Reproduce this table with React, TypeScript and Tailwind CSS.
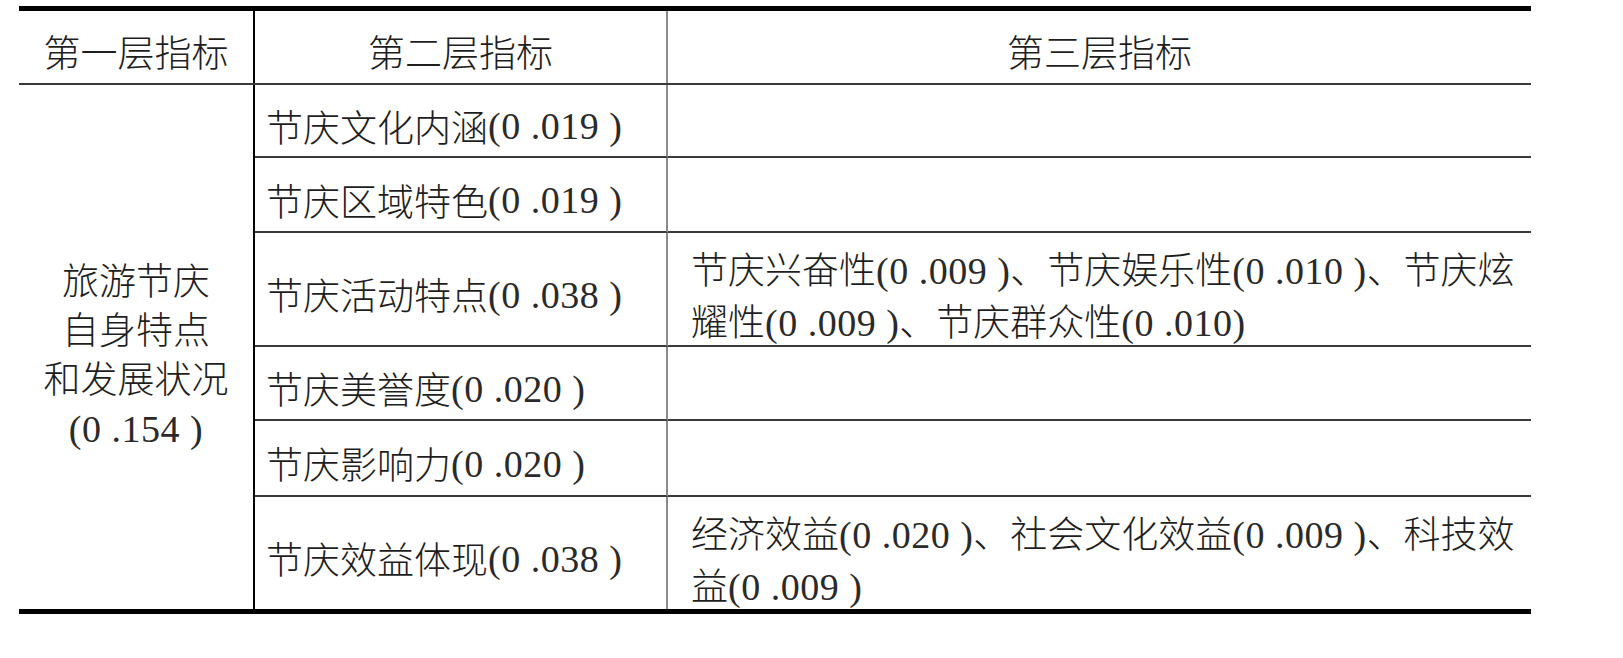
import React from "react";

const cjk = {
  fontFamily: '"Noto Sans CJK SC", sans-serif',
};

function N({ children }: { children: React.ReactNode }) {
  return (
    <span
      className="text-[38px] font-normal tracking-[0.5px] text-[#2a2a2a]"
      style={{ fontFamily: '"Liberation Serif", "Times New Roman", serif' }}
    >
      {children}
    </span>
  );
}

function Cell2({ children, last }: { children: React.ReactNode; last?: boolean }) {
  return (
    <div
      className={`flex items-center pl-[11px] pt-[12px] whitespace-nowrap border-r-[2px] border-[#8a8a8a] ${
        last ? "" : "border-b-[2px] border-b-[#3a3a3a]"
      }`}
    >
      {children}
    </div>
  );
}

function Cell3({ children, last }: { children?: React.ReactNode; last?: boolean }) {
  return (
    <div
      className={`flex items-center pl-[23px] pt-[14px] whitespace-nowrap leading-[49px] ${
        last ? "" : "border-b-[2px] border-[#3a3a3a]"
      }`}
    >
      <div>{children}</div>
    </div>
  );
}

export default function App() {
  return (
    <div className="w-[1623px] h-[658px] bg-white pt-[6px] pl-[19px] text-[#1e1e1e] font-light" style={cjk}>
      <div className="w-[1512px] border-t-[5px] border-b-[5px] border-black text-[37px]">
        {/* header */}
        <div className="grid grid-cols-[236px_413px_863px] h-[74px] border-b-[2px] border-[#3a3a3a]">
          <div className="flex items-center justify-center pt-[10px] border-r-[2px] border-black">第一层指标</div>
          <div className="flex items-center justify-center pt-[10px] border-r-[2px] border-[#8a8a8a]">第二层指标</div>
          <div className="flex items-center justify-center pt-[10px]">第三层指标</div>
        </div>
        {/* body */}
        <div className="grid grid-cols-[236px_413px_863px] grid-rows-[73px_75px_114px_74px_76px_112px]">
          <div className="row-span-6 flex items-center justify-center border-r-[2px] border-black">
            <div className="text-center leading-[49px] pt-[14px]">
              旅游节庆
              <br />
              自身特点
              <br />
              和发展状况
              <br />
              <N>(0 .154 )</N>
            </div>
          </div>
          <Cell2>
            节庆文化内涵<N>(0 .019 )</N>
          </Cell2>
          <Cell3 />
          <Cell2>
            节庆区域特色<N>(0 .019 )</N>
          </Cell2>
          <Cell3 />
          <Cell2>
            节庆活动特点<N>(0 .038 )</N>
          </Cell2>
          <Cell3>
            节庆兴奋性<N>(0 .009 )</N>、节庆娱乐性<N>(0 .010 )</N>、节庆炫
            <br />
            耀性<N>(0 .009 )</N>、节庆群众性<N>(0 .010)</N>
          </Cell3>
          <Cell2>
            节庆美誉度<N>(0 .020 )</N>
          </Cell2>
          <Cell3 />
          <Cell2>
            节庆影响力<N>(0 .020 )</N>
          </Cell2>
          <Cell3 />
          <Cell2 last>
            节庆效益体现<N>(0 .038 )</N>
          </Cell2>
          <Cell3 last>
            经济效益<N>(0 .020 )</N>、社会文化效益<N>(0 .009 )</N>、科技效
            <br />
            益<N>(0 .009 )</N>
          </Cell3>
        </div>
      </div>
    </div>
  );
}
